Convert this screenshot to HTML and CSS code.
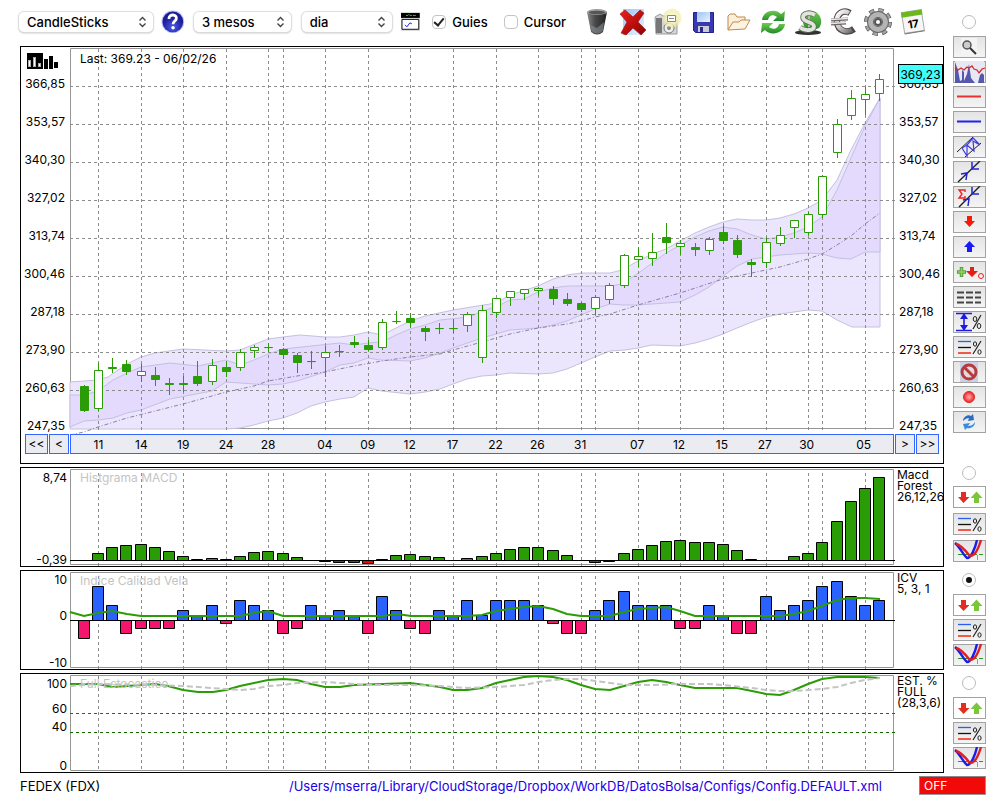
FILE: index.html
```
<!DOCTYPE html>
<html lang="ca">
<head>
    <meta charset="UTF-8">
    <title>FEDEX (FDX)</title>
    <link rel="stylesheet" href="styles.css">
</head>
<body>
<svg class="defs" aria-hidden="true">
    <defs>
        <linearGradient id="g-dark" x2="1"><stop offset="0" stop-color="#8a8a8a"/><stop offset=".4" stop-color="#4a4a4a"/><stop offset="1" stop-color="#222"/></linearGradient>
        <linearGradient id="g-metal" x2="1" y2="1"><stop offset="0" stop-color="#fff"/><stop offset=".5" stop-color="#c5c2c5"/><stop offset="1" stop-color="#6c686c"/></linearGradient>
        <linearGradient id="g-green" x2="0" y2="1"><stop offset="0" stop-color="#6fcb4e"/><stop offset="1" stop-color="#238a2c"/></linearGradient>
        <linearGradient id="g-red" x2="1" y2="1"><stop offset="0" stop-color="#f0201c"/><stop offset="1" stop-color="#8c0000"/></linearGradient>
        <linearGradient id="g-sky" x2="1" y2="1"><stop offset="0" stop-color="#9cc4f6"/><stop offset="1" stop-color="#e8f3ff"/></linearGradient>
        <radialGradient id="g-help" cx=".5" cy=".75"><stop offset="0" stop-color="#4a5ae8"/><stop offset="1" stop-color="#1c1c98"/></radialGradient>
        <radialGradient id="g-glow"><stop offset="0" stop-color="#fff"/><stop offset=".6" stop-color="#f6f2b8"/><stop offset="1" stop-color="#eee88c" stop-opacity=".5"/></radialGradient>
        <radialGradient id="g-dot"><stop offset="0" stop-color="#ffb0b0"/><stop offset="1" stop-color="#f02020"/></radialGradient>
    </defs>
    <symbol id="i-updown" viewBox="0 0 33 22">
        <path d="M8 6h5v5h3.500l-6 6-5.500-6h3z" fill="#e32d20"/>
        <path d="M21 17v-5h-3.500l6-6.500 6 6.500h-3.500v5z" fill="#7cc63c"/>
    </symbol>
    <symbol id="i-percent" viewBox="0 0 33 22">
        <path d="M5 5.500h13" stroke="#2a5cf0" stroke-width="1.300"/>
        <path d="M5 11.500h13" stroke="#111" stroke-width="1.300"/>
        <path d="M5 17h13" stroke="#f05a48" stroke-width="2"/>
        <path d="M28 5l-8 13" stroke="#222" stroke-width="1.200"/>
        <ellipse cx="22" cy="8" rx="1.600" ry="2.200" fill="none" stroke="#222"/>
        <ellipse cx="26.500" cy="16" rx="1.600" ry="2.200" fill="none" stroke="#222"/>
    </symbol>
    <symbol id="i-cross" viewBox="0 0 33 22">
        <path d="M5 14.500h25" stroke="#2c9a20" stroke-dasharray="5 2"/>
        <path d="M24.500 15v5" stroke="#999"/>
        <path d="M2 3c5 4 8 12 12 15 4 0 8-9 10-18" fill="none" stroke="#1c1ce8" stroke-width="2.400"/>
        <path d="M3 4c5 1 9 6 13 11 5 3 9-5 12-15" fill="none" stroke="#e02020" stroke-width="2.400"/>
    </symbol>
    <symbol id="i-arrows" viewBox="0 0 9 12">
        <path d="M1.500 4.500l3-3 3 3M1.500 7.500l3 3 3-3" fill="none" stroke="#444" stroke-width="1.400"/>
    </symbol>
</svg>

<div class="layout">
    <main class="charts">
        <header class="toolbar">
            <span class="picker wide">
                <select aria-label="Chart type"><option>CandleSticks</option></select>
                <svg><use href="#i-arrows"/></svg>
            </span>
            <button class="help" aria-label="Help">
                <svg viewBox="0 0 24 24">
                    <circle cx="12" cy="12" r="11.500" fill="#b9bdf8"/>
                    <circle cx="12" cy="12" r="10.500" fill="url(#g-help)"/>
                    <path d="M8 9c0-5.500 8.500-5 7.500 0-.5 2.300-3.300 2.500-3.300 5.500" fill="none" stroke="#fff" stroke-width="2.800"/>
                    <circle cx="12.200" cy="18" r="1.800" fill="#fff"/>
                </svg>
            </button>
            <span class="picker">
                <select aria-label="Range"><option>3 mesos</option></select>
                <svg><use href="#i-arrows"/></svg>
            </span>
            <span class="picker narrow">
                <select aria-label="Interval"><option>dia</option></select>
                <svg><use href="#i-arrows"/></svg>
            </span>
            <button class="mini" aria-label="Draw">
                <svg viewBox="0 0 20 20">
                    <path d="M0 0h20v20H0z" fill="#ddd"/>
                    <path d="M0 1h19v5H0z"/>
                    <path d="M5 3.500h2l1-1 1 1h2m1 0h3" fill="none" stroke="#2fbf2f"/>
                    <path d="M1 7.500h17v10H1z" fill="#fff" stroke="#111"/>
                    <path d="M4 13l2 2 3-4 2 1" fill="none" stroke="#2020e8"/>
                </svg>
            </button>
            <label class="check"><input type="checkbox" checked>Guies</label>
            <label class="check"><input type="checkbox">Cursor</label>
            <div class="actions">
                <button aria-label="Delete">
                    <svg viewBox="0 0 28 28">
                        <path d="M3 4l4 20q6 5 12 0l4-20z" fill="url(#g-dark)"/>
                        <ellipse cx="13" cy="4" rx="10" ry="3" fill="#9b9b9b"/>
                        <ellipse cx="13" cy="4.500" rx="8" ry="1.800" fill="#555"/>
                        <path d="M6 17l7 3 7-6-1 9q-6 5-11 0z" fill="#8b8f96" opacity=".6"/>
                    </svg>
                </button>
                <button aria-label="Close">
                    <svg viewBox="0 0 28 28">
                        <path d="M4 1h21v26H4z" fill="url(#g-sky)"/>
                        <path d="M1 6l5-4 8 7 7-7 4 3-6 9 8 8-5 5-8-7-7 7-5-2 6-11z" fill="url(#g-red)" stroke="#a00c0c" stroke-width=".6"/>
                    </svg>
                </button>
                <button aria-label="Snapshot">
                    <svg viewBox="0 0 28 28">
                        <path d="M1 9l5-3 3 2h14v18H2z" fill="#d5d5d5" stroke="#9b9b9b"/>
                        <path d="M2 10h6v15H2z" fill="#777"/>
                        <circle cx="15" cy="20" r="5" fill="#efefef" stroke="#777"/>
                        <circle cx="15" cy="20" r="2" fill="#888"/>
                        <circle cx="18" cy="10" r="9.500" fill="url(#g-glow)" opacity=".9"/>
                        <path d="M13.500 7.500h8v6h-8z" fill="#fff" stroke="#888"/>
                        <path d="M15 10.500h5" stroke="#888"/>
                    </svg>
                </button>
                <button aria-label="Save">
                    <svg viewBox="0 0 28 28">
                        <path d="M4.500 4.500h20v20h-18l-2-2z" fill="#3838b0" stroke="#20208c"/>
                        <path d="M8 4h13v10H8z" fill="url(#g-sky)"/>
                        <path d="M9 18h11v6H9z" fill="#c9c9d8"/>
                        <path d="M11 19h3v5h-3z" fill="#2c2c88"/>
                    </svg>
                </button>
                <button aria-label="Open">
                    <svg viewBox="0 0 28 28">
                        <path d="M4 22V8l2-2h5l2 3h8v4" fill="#fbeeda" stroke="#c2894c"/>
                        <path d="M4 22l5-8h6l2-2h9l-5 9z" fill="#fdf3e2" stroke="#c2894c"/>
                    </svg>
                </button>
                <button aria-label="Refresh">
                    <svg viewBox="0 0 28 28">
                        <path d="M3 12C4 2 17 0 22 6l4-3-1 10H14l4-4c-4-3-8-2-9 3z" fill="url(#g-green)"/>
                        <path d="M26 16c-1 10-15 12-20 6l-4 3 1-10h11l-4 4c4 3 9 2 10-3z" fill="url(#g-green)"/>
                    </svg>
                </button>
                <button aria-label="Dollar">
                    <svg viewBox="0 0 28 28">
                        <ellipse cx="14" cy="24.500" rx="13" ry="2.500" fill="#333"/>
                        <path d="M12 3c12-3 19 9 13 17l-10 4c-8-5-7-16-3-21z" fill="url(#g-green)"/>
                        <path d="M15 2v21" stroke="#bbb" stroke-width="2"/>
                        <path d="M21 7C16 4 9 5 9 9.500c0 5 11 4 11 9 0 4-9 5-14 1" fill="none" stroke="#5c6a58" stroke-width="5.500"/>
                        <path d="M21 7C16 4 9 5 9 9.500c0 5 11 4 11 9 0 4-9 5-14 1" fill="none" stroke="#dfe5da" stroke-width="3.800"/>
                    </svg>
                </button>
                <button aria-label="Euro">
                    <svg viewBox="0 0 28 28">
                        <path d="M21 5C14 1 7 6 8 14c1 9 10 12 17 7" fill="none" stroke="#4d4548" stroke-width="6.500"/>
                        <path d="M20 5C14 1 7 6 8 14c1 8 9 11 15 8" fill="none" stroke="url(#g-metal)" stroke-width="4.500"/>
                        <path d="M2 12l17-1M2 16l15-1" stroke="#6b6568" stroke-width="3"/>
                        <path d="M2 11.500l17-1M2 15.500l15-1" stroke="#e8e6e8" stroke-width="1.700"/>
                    </svg>
                </button>
                <button aria-label="Settings">
                    <svg viewBox="0 0 28 28">
                        <circle cx="14" cy="14" r="11.500" fill="none" stroke="#5c5c5c" stroke-width="5" stroke-dasharray="5.030 4"/>
                        <circle cx="14" cy="14" r="11.500" fill="none" stroke="#a5a5a5" stroke-width="3.500" stroke-dasharray="4.030 5" stroke-dashoffset="-.5"/>
                        <circle cx="14" cy="14" r="7.500" fill="none" stroke="#666" stroke-width="7"/>
                        <circle cx="14" cy="14" r="7.500" fill="none" stroke="#b4b4b4" stroke-width="5"/>
                        <circle cx="14" cy="14" r="4" fill="#555"/>
                        <circle cx="14" cy="14" r="2" fill="#fff"/>
                    </svg>
                </button>
                <button aria-label="Calendar">
                    <svg viewBox="0 0 28 28">
                        <g transform="rotate(-9 14 14)">
                            <path d="M4 3h20v21H4z" fill="#f7f7f7" stroke="#aaa"/>
                            <path d="M3.500 3h21v5h-21z" fill="#6cb81c"/>
                            <path d="M4 24.500h20" stroke="#777"/>
                            <text x="14" y="20" text-anchor="middle" class="day">17</text>
                        </g>
                    </svg>
                </button>
            </div>
        </header>

        <section class="panel price">
            <div class="scale left">
                <button class="type" aria-label="Chart style">
                    <svg viewBox="0 0 32 16">
                        <path d="M0 0h16v16H0zM17 6h4v10h-4zM22 3h4v13h-4zM27 9h4v6h-4z"/>
                        <path d="M2.500 7v7M7.500 4v10M12.500 10v4" stroke="#aaa" stroke-width="3"/>
                        <path d="M2.500 8v5M7.500 5v8M12.500 11v2" stroke="#fff"/>
                    </svg>
                </button>
                <div class="prices" data-prices></div>
            </div>
            <div class="plot">
                <svg id="price" viewBox="70 47 824 387" preserveAspectRatio="none"></svg>
                <span class="caption">Last: 369.23 - 06/02/26</span>
            </div>
            <div class="scale right">
                <div class="prices" data-prices></div>
                <span class="last">369,23</span>
            </div>
            <div class="nav back"><button>&lt;&lt;</button><button>&lt;</button></div>
            <div id="dates" class="dates"></div>
            <div class="nav"><button>&gt;</button><button>&gt;&gt;</button></div>
        </section>

        <section class="panel">
            <div class="ticks"><span>8,74</span><span>-0,39</span></div>
            <div class="plot">
                <svg id="macd" viewBox="70 468 824 98" preserveAspectRatio="none"></svg>
                <span class="caption faint">Histgrama MACD</span>
            </div>
            <p class="params">Macd<br>Forest<br>26,12,26</p>
        </section>

        <section class="panel">
            <div class="ticks spread"><span>10</span><span>0</span><span>-10</span></div>
            <div class="plot">
                <svg id="icv" viewBox="70 571 824 98" preserveAspectRatio="none"></svg>
                <span class="caption faint">Indice Calidad Vela</span>
            </div>
            <p class="params">ICV<br>5, 3, 1</p>
        </section>

        <section class="panel">
            <div class="ticks levels"><span>100</span><span>60</span><span>40</span><span>0</span></div>
            <div class="plot">
                <svg id="stoch" viewBox="70 674 824 98" preserveAspectRatio="none"></svg>
                <span class="caption faint">Full Estocastico</span>
            </div>
            <p class="params">EST. %<br>FULL<br>(28,3,6)</p>
        </section>
    </main>

    <aside class="side">
        <input type="radio" name="panel" aria-label="Price">
        <div class="tools">
            <button aria-label="Zoom"><svg viewBox="0 0 33 22"><path d="M8 2h16v18H8z" fill="#f4f4f4"/><circle cx="14" cy="9" r="4" fill="#ccc" stroke="#555" stroke-width="1.500"/><path d="M17 12l6 6" stroke="#333" stroke-width="2"/></svg></button>
            <button aria-label="Volume"><svg viewBox="0 0 33 22"><path d="M2 0h29v22H2z" fill="#e8e8f4"/><path d="M2 22V1l3 8 2 11 2-1V9l2 2v9l3-7 2-10 2 14 4 5V9v13h3l2-8 2-2 2 2v8z" fill="#5558ac"/><path d="M2 7l3 2 3-2 3 2 3-3 2 1 3-2 2 3 3 1 2 3 3-4 3-1" fill="none" stroke="#dc2626" stroke-width="1.300"/></svg></button>
            <button aria-label="Resistance"><svg viewBox="0 0 33 22"><path d="M4 10.500h24" stroke="#e83030" stroke-width="2"/></svg></button>
            <button aria-label="Support"><svg viewBox="0 0 33 22"><path d="M4 10.500h24" stroke="#2222f0" stroke-width="2"/></svg></button>
            <button aria-label="Channel"><svg viewBox="0 0 33 22"><path d="M4 16L20 1M12 21L28 7" stroke="#222"/><path d="M9 12l5 8v-11l7 6-1-10 7 4M9 12l5-3M14 9l6-7 7 7" fill="none" stroke="#3c3ce4" stroke-width="1.200"/></svg></button>
            <button aria-label="Trend"><svg viewBox="0 0 33 22"><path d="M5 21L27 0" stroke="#222" stroke-width="1.400"/><path d="M8 13l6-1-1 7M19 1v7h7" fill="none" stroke="#2222d8" stroke-width="1.500"/></svg></button>
            <button aria-label="Trend sum"><svg viewBox="0 0 33 22"><path d="M6 21L27 0" stroke="#222" stroke-width="1.400"/><path d="M10 14l6-1-1 7M19 1v7h7" fill="none" stroke="#2222d8" stroke-width="1.500"/><path d="M12 6V4H6l3 4-3 4h6v-2" fill="none" stroke="#e22" stroke-width="1.400"/></svg></button>
            <button aria-label="Sell"><svg viewBox="0 0 33 22"><path d="M14 5h5v5h3l-5.500 6L11 10h3z" fill="#f81808"/></svg></button>
            <button aria-label="Buy"><svg viewBox="0 0 33 22"><path d="M14 16v-5h-3l5.500-6 5.500 6h-3v5z" fill="#1818f8"/></svg></button>
            <button aria-label="Marks"><svg viewBox="0 0 33 22"><path d="M8.500 6v10M4 11h9" stroke="#5a9c3c" stroke-width="3.500"/><path d="M8.500 7v8M5 11h7" stroke="#8cd860" stroke-width="1.500"/><path d="M17 6h4v4h4l-6 6-6-6h4z" fill="#e42015"/><circle cx="28" cy="15" r="2.500" fill="none" stroke="#e22"/></svg></button>
            <button aria-label="Levels"><svg viewBox="0 0 33 22"><path d="M4 6.500h24M4 11.500h24M4 16.500h24" stroke="#444" stroke-width="2" stroke-dasharray="7 2"/></svg></button>
            <button aria-label="Range percent"><svg viewBox="0 0 33 22"><path d="M3 2.500h16M3 19.500h16M11 4v14" stroke="#1c1ce0" stroke-width="1.600"/><path d="M7 8l4-6 4 6zM7 14l4 6 4-6z" fill="#1c1ce0"/><path d="M28 4l-8 14" stroke="#222" stroke-width="1.200"/><ellipse cx="22" cy="8" rx="1.800" ry="2.500" fill="none" stroke="#222"/><ellipse cx="26" cy="15" rx="1.800" ry="2.500" fill="none" stroke="#222"/></svg></button>
            <button aria-label="Lines percent"><svg><use href="#i-percent"/></svg></button>
            <button aria-label="Block"><svg viewBox="0 0 33 22"><path d="M7 1h18v20H7z" fill="#ccd0e4"/><circle cx="16" cy="11" r="7" fill="#e8d8dc" stroke="#b43c40" stroke-width="3"/><path d="M11 6l10 10" stroke="#b43c40" stroke-width="3"/></svg></button>
            <button aria-label="Record"><svg viewBox="0 0 33 22"><circle cx="16" cy="11" r="5.500" fill="url(#g-dot)" stroke="#e02828"/></svg></button>
            <button aria-label="Reload"><svg viewBox="0 0 33 22"><path d="M10 10c0-4 5-7 8-5l2-2 1 6-6 1 1-3c-2 0-4 1-6 3z" fill="#2a6cc0"/><path d="M22 11c0 5-5 7-8 6l-2 2-2-6 7-1-2 3c3 0 5-1 7-4z" fill="#3c8cdc"/></svg></button>
        </div>
        <div class="group roomy">
            <input type="radio" name="panel" aria-label="MACD">
            <button class="light" aria-label="Signals"><svg><use href="#i-updown"/></svg></button>
            <button aria-label="Lines percent"><svg><use href="#i-percent"/></svg></button>
            <button aria-label="Crosses"><svg><use href="#i-cross"/></svg></button>
        </div>
        <div class="group">
            <input type="radio" name="panel" aria-label="ICV" checked>
            <button class="light" aria-label="Signals"><svg><use href="#i-updown"/></svg></button>
            <button aria-label="Lines percent"><svg><use href="#i-percent"/></svg></button>
            <button aria-label="Crosses"><svg><use href="#i-cross"/></svg></button>
        </div>
        <div class="group">
            <input type="radio" name="panel" aria-label="Stochastic">
            <button class="light" aria-label="Signals"><svg><use href="#i-updown"/></svg></button>
            <button aria-label="Lines percent"><svg><use href="#i-percent"/></svg></button>
            <button aria-label="Crosses"><svg><use href="#i-cross"/></svg></button>
        </div>
    </aside>
</div>

<footer class="status">
    <span>FEDEX (FDX)</span>
    <span class="path">/Users/mserra/Library/CloudStorage/Dropbox/WorkDB/DatosBolsa/Configs/Config.DEFAULT.xml</span>
    <button class="switch">OFF</button>
</footer>
<script src="chart.js"></script>
</body>
</html>
```
FILE: styles.css
```
* {
    box-sizing: border-box;
}

body {
    margin: 0;
    background: #fff;
    color: #000;
    font: 12px/14px Inter, "Liberation Sans", sans-serif;
}

button {
    padding: 0;
    border: 0;
    background: none;
    color: inherit;
    font: inherit;
}

svg {
    display: block;
}

.defs {
    position: absolute;
    width: 0;
    height: 0;
}

.layout {
    display: grid;
    grid-template-columns: minmax(0, 1fr) 33px;
    column-gap: 9px;
    padding: 0 14px 0 20px;
}

.charts {
    display: flex;
    flex-direction: column;
    gap: 3px;
}

/* toolbar */

.toolbar {
    display: flex;
    align-items: center;
    height: 43px;
    margin-left: -1px;
    font-size: 13px;
}

.picker {
    position: relative;
    width: 98px;
    margin-right: 11px;
}

.picker.wide {
    width: 136px;
    margin-right: 8px;
}

.picker.narrow {
    width: 91px;
    margin-right: 9px;
}

.picker select {
    width: 100%;
    height: 20px;
    padding: 0 8px;
    border: 0;
    border-radius: 5px;
    background: #fff;
    box-shadow: 0 0 1px 1px #ddd, 0 1px 2px #aaa;
    color: #000;
    font: 500 13px/18px Inter, sans-serif;
    appearance: none;
}

.picker svg {
    position: absolute;
    top: 4px;
    right: 6px;
    width: 9px;
    height: 12px;
    pointer-events: none;
}

.help {
    width: 24px;
    margin-right: 9px;
}

.mini {
    width: 20px;
    margin-right: 12px;
}

.check {
    display: flex;
    align-items: center;
    gap: 6px;
    margin-right: 16px;
    font-weight: 500;
}

.check input {
    display: grid;
    place-items: center;
    width: 14px;
    height: 14px;
    margin: 0;
    border: 1px solid #c4c4c4;
    border-radius: 4px;
    appearance: none;
}

.check input:checked::after {
    content: "";
    width: 4px;
    height: 8px;
    margin-bottom: 2px;
    border: solid #222;
    border-width: 0 2px 2px 0;
    transform: rotate(40deg);
}

.actions {
    display: flex;
    gap: 3px;
    margin-left: auto;
    margin-right: 15px;
}

.actions button {
    display: flex;
    justify-content: center;
    width: 32px;
}

.actions svg {
    width: 28px;
    height: 28px;
}

.day {
    font: 700 11px Inter, sans-serif;
}

/* panels */

.panel {
    display: grid;
    grid-template-columns: 49px minmax(0, 1fr) 49px;
    border: 1px solid #000;
}

.price {
    padding-bottom: 9px;
}

.plot {
    position: relative;
}

.plot svg {
    width: 100%;
    height: 98px;
    overflow: visible;
}

.price .plot svg {
    height: 387px;
}

.plot svg * {
    vector-effect: non-scaling-stroke;
}

.caption {
    position: absolute;
    top: 5px;
    left: 10px;
}

.caption.faint {
    top: 3px;
    color: #c4c4c4;
}

.scale {
    position: relative;
}

.type {
    display: block;
    width: 32px;
    margin: 6px 0 8px 6px;
}

.prices {
    display: flex;
    flex-direction: column;
    gap: 24px;
    text-align: right;
    padding-right: 5px;
}

.right .prices {
    padding: 30px 0 0 5px;
    text-align: left;
}

.last {
    position: absolute;
    top: 17px;
    right: 0;
    left: 4px;
    height: 20px;
    border: 1px solid #000;
    background: #40ffff;
    line-height: 20px;
    text-align: center;
}

.nav {
    display: flex;
    gap: 1px;
    padding-left: 1px;
}

.nav.back {
    padding: 0 1px 0 4px;
}

.nav button {
    flex: 0 1 20px;
    border: 1px solid #3366ff;
    background: #ebebf2;
}

.nav.back button:first-child,
.nav button:last-child:not(.back *) {
    flex-basis: 23px;
}

.dates {
    position: relative;
    height: 20px;
    border: 1px solid #3366ff;
    background: #ebebf2;
    line-height: 20px;
}

.dates span {
    position: absolute;
    transform: translateX(-50%);
}

.ticks {
    display: flex;
    flex-direction: column;
    padding: 4px 3px 0 0;
    line-height: 12px;
    text-align: right;
}

.ticks span:last-child {
    margin-top: auto;
}

.ticks.spread {
    padding-top: 3px;
}

.spread span:nth-child(2) {
    margin-top: 24px;
}

.levels span:nth-child(2) {
    margin-top: 13px;
}

.levels span:nth-child(3) {
    margin-top: 6px;
}

.params {
    margin: 0;
    padding: 1px 0 0 3px;
    overflow: hidden;
    line-height: 11px;
    white-space: nowrap;
}

/* side tools */

.side {
    display: flex;
    flex-direction: column;
    padding-top: 15px;
}

.side input {
    display: grid;
    place-items: center;
    width: 14px;
    height: 14px;
    margin: 0 0 0 9px;
    border: 1px solid #bbb;
    border-radius: 50%;
    appearance: none;
}

.side input:checked::after {
    content: "";
    width: 6px;
    height: 6px;
    border-radius: 50%;
    background: #111;
}

.side button {
    width: 33px;
    height: 22px;
    border: 1px solid #a2a2a2;
    background: linear-gradient(#e4e4e4, #f4f4f4);
}

.side button.light {
    background: #fff;
}

.side svg {
    width: 33px;
    height: 22px;
    margin: -1px;
}

.tools {
    display: flex;
    flex-direction: column;
    gap: 3px;
    margin: 7px 0 33px;
}

.group {
    display: flex;
    flex-direction: column;
    gap: 3px;
    height: 103px;
    padding-top: 4px;
}

.group:last-child {
    height: 100px;
}

.group input {
    margin-bottom: 4px;
}

.group.roomy {
    gap: 5px;
    padding-top: 0;
}

.roomy input {
    margin-bottom: 1px;
}

/* status line */

.status {
    display: flex;
    align-items: center;
    justify-content: space-between;
    height: 25px;
    padding: 0 14px 0 20px;
    font-size: 13px;
}

.path {
    margin: 0 37px 0 auto;
    color: #2000e8;
}

.switch {
    width: 67px;
    height: 19px;
    padding: 0 4px;
    border: 1px solid;
    border-color: #888 #999 #999 #888;
    background: #f20a08;
    color: #fff;
    font-size: 12px;
    text-align: left;
}
```
FILE: chart.js
```
const step = 14.2075, first = 84.2;
const xAt = i => Math.floor(first + step * i) + .5;

const dates = [[1, '11'], [4, '14'], [7, '19'], [10, '24'], [13, '28'], [17, '04'], [20, '09'], [23, '12'],
    [26, '17'], [29, '22'], [32, '26'], [35, '31'], [39, '07'], [42, '12'], [45, '15'], [48, '27'], [51, '30'], [55, '05']];
// month changes get a grid line of their own
const gridAt = dates.map(d => d[0]).concat([14, 36, 52]);
const prices = ['366,85', '353,57', '340,30', '327,02', '313,74', '300,46', '287,18', '273,90', '260,63', '247,35'];

// up, high, top, bottom, low
const candles = [
    [0, 385, 386, 410, 411], [1, 363, 370, 408, 410], [0, 358, 367, 368, 372], [0, 360, 364, 371, 374],
    [1, 364, 371, 375, 381], [0, 367, 375, 379, 385], [0, 378, 383, 384, 394], [0, 376, 383, 384, 391],
    [0, 361, 376, 383, 385], [1, 359, 365, 381, 384], [0, 361, 367, 371, 376], [1, 349, 352, 367, 370],
    [1, 345, 347, 350, 357], [0, 343, 347, 347, 351], [0, 348, 349, 354, 358], [0, 353, 355, 362, 372],
    [0, 351, 361, 361, 368], [1, 346, 352, 357, 376], [0, 345, 351, 351, 356], [0, 336, 342, 344, 347],
    [0, 340, 345, 349, 350], [1, 319, 322, 347, 349], [0, 311, 321, 321, 323], [0, 313, 318, 322, 327],
    [0, 326, 328, 331, 340], [0, 323, 328, 328, 333], [0, 319, 328, 328, 332], [1, 312, 314, 325, 331],
    [1, 305, 310, 357, 362], [1, 298, 298, 312, 317], [1, 291, 291, 297, 305], [1, 289, 289, 293, 299],
    [1, 287, 288, 290, 295], [0, 286, 289, 298, 304], [0, 293, 299, 303, 305], [0, 302, 303, 309, 311],
    [1, 295, 297, 308, 314], [1, 283, 285, 299, 303], [1, 254, 255, 285, 287], [1, 247, 256, 259, 266],
    [1, 233, 252, 258, 265], [0, 223, 237, 242, 253], [1, 240, 243, 246, 254], [0, 243, 247, 249, 255],
    [1, 237, 239, 250, 254], [0, 226, 232, 240, 243], [0, 235, 240, 254, 257], [0, 259, 262, 264, 276],
    [1, 237, 242, 262, 267], [1, 227, 235, 243, 245], [1, 220, 220, 227, 237], [1, 212, 214, 232, 234],
    [1, 175, 176, 214, 217], [1, 119, 124, 152, 157], [1, 90, 98, 115, 119], [1, 87, 94, 99, 114],
    [1, 74, 79, 93, 100]
];

const outerTop = '70,382 98,380 108,377 127,364 141,357 155,353 183,349 226,351 240,350 268,339 283,337 300,335 325,337 340,337 354,335 368,332 382,335 396,328 410,321 425,316 453,310 496,303 510,295 538,286 553,279 567,275 581,273 610,273 622,270 638,261 652,254 666,249 680,241 695,233 709,227 723,222 737,219 752,220 766,220 780,218 794,214 808,208 822,200 837,180 851,150 865,123 880,98';
const outerBottom = '70,429 226,429 240,428 254,425 268,421 283,418 297,413 311,406 325,402 340,399 354,397 368,388 382,391 410,394 425,392 440,389 453,384 467,379 482,376 496,375 510,373 538,374 553,373 567,369 581,363 595,357 610,351 625,350 638,348 652,345 680,346 695,343 709,339 723,334 737,328 752,322 766,317 780,314 794,312 808,310 822,311 837,320 852,327 880,327';
const innerTop = '70,395 84,395 98,391 113,380 127,373 141,367 170,363 198,366 226,360 240,365 254,360 268,354 283,349 311,346 340,343 354,345 368,343 382,342 396,335 410,329 425,325 440,320 470,317 482,311 496,307 510,300 524,299 538,292 553,288 567,286 610,286 622,284 640,272 666,253 695,237 709,231 723,227 737,229 752,235 766,239 780,237 794,233 808,227 822,217 837,190 851,158 865,126 880,98';
const innerBottom = '70,427 84,421 98,420 113,418 127,413 141,410 170,399 212,391 226,382 240,383 268,385 283,384 297,381 325,372 340,365 354,363 368,358 380,360 410,361 425,358 440,353 453,348 482,338 510,330 538,328 553,325 567,321 581,315 595,309 610,304 622,305 638,305 652,304 680,302 695,295 709,287 723,276 737,266 752,259 766,257 780,255 808,253 822,254 837,258 851,259 865,252 880,252';
const middle = '70,435 84,432 98,427 127,418 155,411 183,404 212,396 226,392 254,386 268,381 297,376 325,372 354,366 382,361 410,357 440,354 453,350 482,342 510,334 538,328 567,324 581,321 595,317 610,314 638,305 666,297 680,293 723,279 766,270 780,267 808,259 822,254 837,245 851,236 865,224 880,213';

const macd = [0, 7, 13, 15, 16, 13, 9, 4, 1, 2, 1, 4, 8, 9, 7, 3, 0, -1, -2, -2, -3, 1, 5, 6, 4, 3, 0, 2, 4, 7, 11, 13, 13, 10, 5,
    0, -2, -1, 7, 11, 15, 19, 20, 18, 18, 16, 10, 1, 0, 0, 4, 7, 18, 39, 59, 72, 83];
const icv = [-18, 34, 15, -13, -8, -8, -8, 10, 5, 15, -3, 20, 15, 10, -13, -8, 15, 5, 10, 5, -13, 24, 10, -8, -13, 10, 5, 20, 5,
    20, 20, 20, 15, -3, -13, -13, 10, 20, 29, 15, 15, 15, -8, -8, 15, 5, -13, -13, 24, 10, 15, 20, 34, 39, 24, 15, 20];
const icvLine = '70,612 84,616 98,613 112,611 127,614 141,616 240,616 254,613 268,611 283,616 382,616 397,614 411,616 467,616 482,615 496,611 510,609 524,607 538,606 553,609 567,614 581,616 610,616 624,612 638,609 666,607 680,611 695,616 780,616 794,614 808,611 822,606 837,600 851,598 865,598 880,599';
const stochFast = '70,684 98,684 113,687 127,686 155,684 168,686 183,690 198,692 213,692 226,690 240,686 254,683 268,680 283,679 297,680 311,684 325,687 340,687 354,685 383,684 410,683 425,685 440,687 453,690 467,690 482,688 496,683 510,680 524,677 538,676 553,677 567,680 581,685 595,689 610,690 624,686 638,682 652,680 666,682 680,685 695,688 737,688 752,691 766,694 780,695 794,690 808,684 822,679 837,677 865,677 880,678';
const stochSlow = '70,686 98,684 155,685 183,686 198,687 226,689 240,690 254,689 268,686 283,685 297,683 325,682 340,683 368,685 410,685 440,686 467,688 496,687 524,685 538,682 553,680 567,679 581,679 595,681 610,683 624,685 652,685 680,684 709,684 723,685 752,688 766,690 780,691 794,691 822,689 837,687 851,683 865,680 880,678';

const line = (x1, y1, x2, y2, color, dash = '') =>
    `<line x1="${x1}" y1="${y1}" x2="${x2}" y2="${y2}" stroke="${color}" stroke-dasharray="${dash}"/>`;
const poly = (points, color, width = 1, dash = '') =>
    `<polyline points="${points}" fill="none" stroke="${color}" stroke-width="${width}" stroke-dasharray="${dash}"/>`;
const frame = (top, bottom) =>
    `<rect x="70.5" y="${top}" width="823" height="${bottom - top}" fill="none" stroke="#969696"/>`;
const columns = (top, bottom) => gridAt.map(i => line(xAt(i), top, xAt(i), bottom, '#8c8c8c', '3 3')).join('');
const area = (top, bottom, color) =>
    `<polygon points="${top} ${bottom.split(' ').reverse().join(' ')}" fill="${color}" stroke="#c5c0e0"/>`;

const bars = (values, zero, up, down) => values.map((v, i) => {
    if (!v) return '';
    const h = Math.abs(v), y = v > 0 ? zero - h : zero;
    return `<rect x="${xAt(i) - 6}" y="${y}" width="11" height="${h}" fill="${v > 0 ? up : down}" stroke="#000"/>`;
}).join('');

const drawPrice = () => {
    let svg = frame(48.5, 428.5);
    svg += area(outerTop, outerBottom, '#ebe6fe') + area(innerTop, innerBottom, '#e3dafd');
    svg += columns(49, 430);
    for (let y = 86.5; y < 400; y += 38) svg += line(70, y, 896, y, '#8c8c8c', '3 3');
    svg += poly(middle, '#8c80a4', 1, '4 2 1 2');
    candles.forEach(([up, high, top, bottom, low], i) => {
        const x = xAt(i), green = '#2a9c05';
        svg += line(x, high, x, low + 1, green);
        svg += `<rect x="${x - 4}" y="${top + .5}" width="8" height="${Math.max(bottom - top, .1)}" fill="${up ? '#fff' : green}" stroke="${green}"/>`;
    });
    document.getElementById('price').innerHTML = svg;
};

const drawMacd = () => {
    document.getElementById('macd').innerHTML = frame(469.5, 564.5) + columns(473, 566)
        + bars(macd, 560.5, '#2a9c05', '#f00') + line(70, 560.5, 895, 560.5, '#000');
};

const drawIcv = () => {
    document.getElementById('icv').innerHTML = frame(572.5, 667.5) + columns(576, 669)
        + bars(icv, 620.5, '#2962ff', '#f5146e') + line(70, 620.5, 895, 620.5, '#000') + poly(icvLine, '#2a9c05', 2);
};

const drawStoch = () => {
    document.getElementById('stoch').innerHTML = frame(675.5, 770.5) + columns(676, 772)
        + line(70, 713.5, 895, 713.5, '#f00', '3 3') + line(70, 732.5, 895, 732.5, '#146400', '3 3')
        + poly(stochFast, '#2a9c05', 2) + poly(stochSlow, '#c4c4c4', 2, '6 3');
};

document.querySelectorAll('[data-prices]').forEach(el => {
    el.innerHTML = prices.map(p => `<span>${p}</span>`).join('');
});
document.getElementById('dates').innerHTML = dates.map(([i, text]) =>
    `<span style="left: ${((xAt(i) - 71) / 8.24).toFixed(2)}%">${text}</span>`).join('');

drawPrice();
drawMacd();
drawIcv();
drawStoch();
```
